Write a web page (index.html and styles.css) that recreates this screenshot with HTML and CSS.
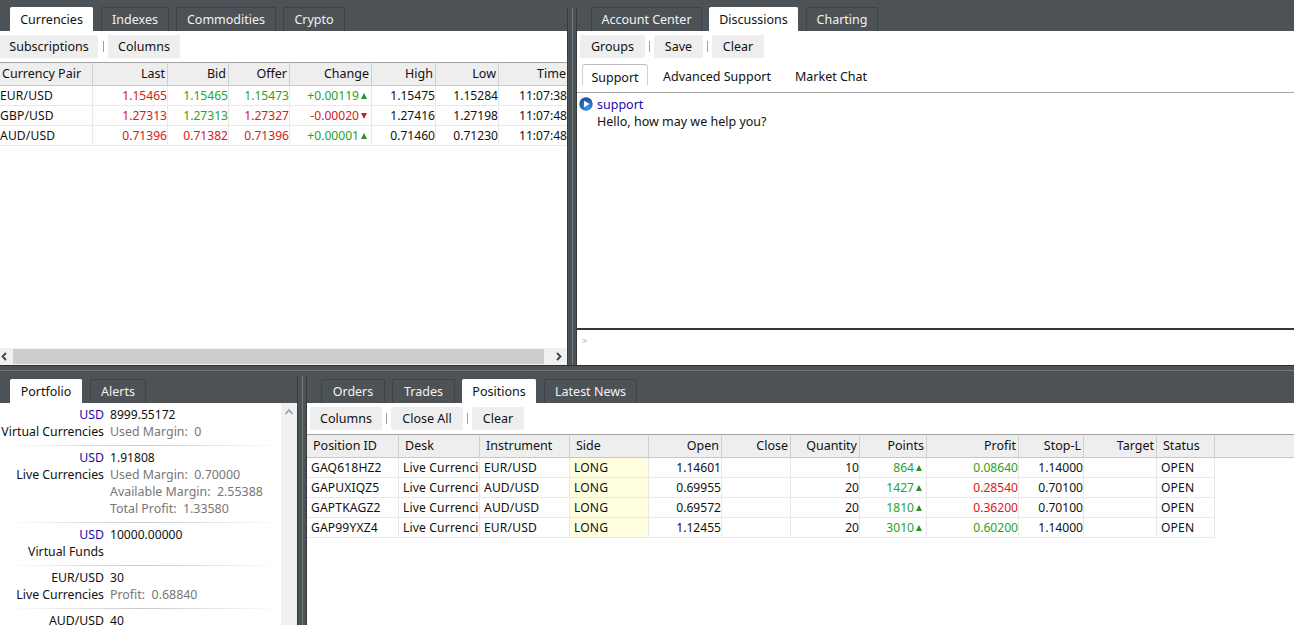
FILE: index.html
```
<!DOCTYPE html>
<html lang="en">
<head>
    <meta charset="UTF-8">
    <meta name="viewport" content="width=device-width, initial-scale=1.0">
    <title>Trading Desk</title>
    <link rel="stylesheet" href="styles.css">
</head>
<body>
    <div class="row row-top">
        <!-- Quotes -->
        <section class="pane">
            <nav class="tabs">
                <a class="tab active w83">Currencies</a>
                <a class="tab w68">Indexes</a>
                <a class="tab w100">Commodities</a>
                <a class="tab w62">Crypto</a>
            </nav>
            <div class="content">
                <div class="toolbar toolbar-flush">
                    <button class="w98">Subscriptions</button>
                    <i></i>
                    <button class="w72">Columns</button>
                </div>
                <table class="grid quotes">
                    <colgroup>
                        <col class="q-pair"><col class="q-last"><col class="q-bid"><col class="q-offer">
                        <col class="q-change"><col class="q-high"><col class="q-low"><col class="q-time">
                    </colgroup>
                    <thead>
                        <tr><th class="left">Currency Pair</th><th>Last</th><th>Bid</th><th>Offer</th><th>Change</th><th>High</th><th>Low</th><th>Time</th></tr>
                    </thead>
                    <tbody>
                        <tr><td class="left">EUR/USD</td><td class="down">1.15465</td><td class="up">1.15465</td><td class="up">1.15473</td><td class="up arrow-up">+0.00119</td><td>1.15475</td><td>1.15284</td><td>11:07:38</td></tr>
                        <tr><td class="left">GBP/USD</td><td class="down">1.27313</td><td class="up">1.27313</td><td class="down">1.27327</td><td class="down arrow-down">-0.00020</td><td>1.27416</td><td>1.27198</td><td>11:07:48</td></tr>
                        <tr><td class="left">AUD/USD</td><td class="down">0.71396</td><td class="down">0.71382</td><td class="down">0.71396</td><td class="up arrow-up">+0.00001</td><td>0.71460</td><td>0.71230</td><td>11:07:48</td></tr>
                    </tbody>
                </table>
                <div class="hscroll">
                    <svg width="13" height="17" viewBox="0 0 13 17"><path d="M6 5 2.500 8.500l3.500 3.500" /></svg>
                    <div class="thumb"></div>
                    <svg width="23" height="17" viewBox="0 0 23 17"><path d="M13 5l3.500 3.500L13 12" /></svg>
                </div>
            </div>
        </section>

        <div class="splitter"></div>

        <!-- Chat -->
        <section class="pane">
            <nav class="tabs tabs-inset">
                <a class="tab w111">Account Center</a>
                <a class="tab active w89">Discussions</a>
                <a class="tab w72 after-active">Charting</a>
            </nav>
            <div class="content">
                <div class="toolbar">
                    <button class="w65">Groups</button>
                    <i></i>
                    <button class="w49">Save</button>
                    <i></i>
                    <button class="w52">Clear</button>
                </div>
                <div class="rooms">
                    <a class="room current">Support</a>
                    <a class="room room-advanced">Advanced Support</a>
                    <a class="room">Market Chat</a>
                </div>
                <div class="messages">
                    <svg width="14" height="14" viewBox="0 0 14 14">
                        <defs>
                            <radialGradient id="ball" cx="0.6" cy="0.75" r="0.7">
                                <stop offset="0" stop-color="#3a9be8" />
                                <stop offset="1" stop-color="#1a4f9e" />
                            </radialGradient>
                        </defs>
                        <circle cx="7" cy="7" r="6.700" fill="url(#ball)" />
                        <path d="M5 3.800 10.500 7 5 10.200z" fill="#fff" />
                    </svg>
                    <div>
                        <div class="author">support</div>
                        <div class="message">Hello, how may we help you?</div>
                    </div>
                </div>
                <div class="prompt">&gt;</div>
            </div>
        </section>
    </div>

    <div class="hsplitter"></div>

    <div class="row row-bottom">
        <!-- Portfolio -->
        <section class="pane">
            <nav class="tabs">
                <a class="tab active w72">Portfolio</a>
                <a class="tab w56 after-active">Alerts</a>
            </nav>
            <div class="content portfolio">
                <div class="accounts">
                    <dl>
                        <dt class="usd">USD</dt><dd class="total">8999.55172</dd>
                        <dt>Virtual Currencies</dt><dd>Used Margin:&nbsp; 0</dd>
                    </dl>
                    <dl>
                        <dt class="usd">USD</dt><dd class="total">1.91808</dd>
                        <dt>Live Currencies</dt><dd>Used Margin:&nbsp; 0.70000</dd>
                        <dd class="more">Available Margin:&nbsp; 2.55388</dd>
                        <dd class="more">Total Profit:&nbsp; 1.33580</dd>
                    </dl>
                    <dl>
                        <dt class="usd">USD</dt><dd class="total">10000.00000</dd>
                        <dt>Virtual Funds</dt><dd></dd>
                    </dl>
                    <dl>
                        <dt>EUR/USD</dt><dd class="total">30</dd>
                        <dt>Live Currencies</dt><dd>Profit:&nbsp; 0.68840</dd>
                    </dl>
                    <dl>
                        <dt>AUD/USD</dt><dd class="total">40</dd>
                    </dl>
                </div>
                <div class="vscroll">
                    <svg width="16" height="18" viewBox="0 0 16 18"><path d="M4.500 11 8 7l3.500 4" /></svg>
                </div>
            </div>
        </section>

        <div class="splitter"></div>

        <!-- Positions -->
        <section class="pane">
            <nav class="tabs tabs-inset">
                <a class="tab w64">Orders</a>
                <a class="tab w63">Trades</a>
                <a class="tab active w74">Positions</a>
                <a class="tab w93 after-active">Latest News</a>
            </nav>
            <div class="content">
                <div class="toolbar">
                    <button class="w72">Columns</button>
                    <i></i>
                    <button class="w72">Close All</button>
                    <i></i>
                    <button class="w52">Clear</button>
                </div>
                <div class="grid-fill">
                    <table class="grid positions">
                        <colgroup>
                            <col class="p-id"><col class="p-desk"><col class="p-inst"><col class="p-side">
                            <col class="p-open"><col class="p-close"><col class="p-qty"><col class="p-points">
                            <col class="p-profit"><col class="p-stop"><col class="p-target"><col class="p-status">
                        </colgroup>
                        <thead>
                            <tr><th class="left">Position ID</th><th class="left">Desk</th><th class="left">Instrument</th><th class="left">Side</th><th>Open</th><th>Close</th><th>Quantity</th><th>Points</th><th>Profit</th><th>Stop-L</th><th>Target</th><th class="left">Status</th></tr>
                        </thead>
                        <tbody>
                            <tr><td class="left">GAQ618HZ2</td><td class="left">Live Currencies</td><td class="left">EUR/USD</td><td class="left side">LONG</td><td>1.14601</td><td></td><td>10</td><td class="up arrow-up">864</td><td class="up">0.08640</td><td>1.14000</td><td></td><td class="left">OPEN</td></tr>
                            <tr><td class="left">GAPUXIQZ5</td><td class="left">Live Currencies</td><td class="left">AUD/USD</td><td class="left side">LONG</td><td>0.69955</td><td></td><td>20</td><td class="up arrow-up">1427</td><td class="down">0.28540</td><td>0.70100</td><td></td><td class="left">OPEN</td></tr>
                            <tr><td class="left">GAPTKAGZ2</td><td class="left">Live Currencies</td><td class="left">AUD/USD</td><td class="left side">LONG</td><td>0.69572</td><td></td><td>20</td><td class="up arrow-up">1810</td><td class="down">0.36200</td><td>0.70100</td><td></td><td class="left">OPEN</td></tr>
                            <tr><td class="left">GAP99YXZ4</td><td class="left">Live Currencies</td><td class="left">EUR/USD</td><td class="left side">LONG</td><td>1.12455</td><td></td><td>20</td><td class="up arrow-up">3010</td><td class="up">0.60200</td><td>1.14000</td><td></td><td class="left">OPEN</td></tr>
                        </tbody>
                    </table>
                </div>
            </div>
        </section>
    </div>
</body>
</html>
```
FILE: styles.css
```
* {
    box-sizing: border-box;
}

body {
    margin: 0;
    width: 1294px;
    height: 625px;
    overflow: hidden;
    background: #4d5256;
    color: #111;
    font-family: "Noto Sans", "Open Sans", sans-serif;
    font-size: 12.5px;
    line-height: 17px;
}

.row {
    display: grid;
}

.row-top {
    grid-template-columns: 567px 10px 1fr;
    height: 365px;
}

.row-bottom {
    grid-template-columns: 297px 10px 1fr;
    height: 254px;
}

.pane {
    display: flex;
    flex-direction: column;
    min-width: 0;
    min-height: 0;
}

.content {
    flex: 1;
    display: flex;
    flex-direction: column;
    min-height: 0;
    overflow: hidden;
    background: #fff;
}

/* Splitters */
.splitter {
    margin-top: 8px;
    background: linear-gradient(90deg, #373b3e 0 1px, #4d5256 1px 5px, #74797c 5px 6px, #4d5256 6px 9px, #373b3e 9px);
}

.row-bottom .splitter {
    margin-top: 5px;
}

.hsplitter {
    height: 6px;
    background: linear-gradient(#2c2f32 0 1px, #4d5256 1px 5px, #70787b 5px);
}

/* Tabs */
.tabs {
    display: flex;
    gap: 7px;
    height: 31px;
    padding: 7px 0 0 10px;
}

.row-bottom .tabs {
    height: 32px;
    padding-top: 8px;
}

.tabs-inset,
.row-bottom .tabs-inset {
    padding-left: 14px;
}

.tab {
    display: flex;
    align-items: center;
    justify-content: center;
    height: 24px;
    border: 1px solid #3e4347;
    border-bottom: 0;
    border-radius: 2px 2px 0 0;
    color: #f2f2f2;
    white-space: nowrap;
}

.tab.active {
    border-color: #fff;
    background: #fff;
    color: #111;
}

.after-active,
.w68 {
    margin-left: 1px;
}

/* Toolbars */
.toolbar {
    display: flex;
    align-items: center;
    flex: none;
    height: 31px;
    padding-left: 3px;
}

.toolbar-flush {
    padding-left: 0;
}

.toolbar button {
    height: 23px;
    padding: 0;
    border: 0;
    border-radius: 2px;
    background: #eee;
    color: #111;
    font: inherit;
}

.toolbar i {
    width: 1px;
    height: 11px;
    margin: 0 4px;
    background: #a0a0a0;
}

.toolbar-flush i {
    margin-left: 5px;
}

.w49 { width: 49px; }
.w52 { width: 52px; }
.w56 { width: 56px; }
.w62 { width: 62px; }
.w63 { width: 63px; }
.w64 { width: 64px; }
.w65 { width: 65px; }
.w68 { width: 68px; }
.w72 { width: 72px; }
.w74 { width: 74px; }
.w83 { width: 83px; }
.w89 { width: 89px; }
.w93 { width: 93px; }
.w98 { width: 98px; }
.w100 { width: 100px; }
.w111 { width: 111px; }

/* Data grids */
.grid {
    table-layout: fixed;
    flex: none;
    border-collapse: separate;
    border-spacing: 0;
}

.grid th,
.grid td {
    overflow: hidden;
    padding: 0;
    border-right: 1px solid #e9e9e9;
    border-bottom: 1px solid #e9e9e9;
    text-align: right;
    white-space: nowrap;
}

.grid th {
    height: 24px;
    padding: 0 2px 2px;
    border-top: 1px solid #a3a3a3;
    border-right-color: #cfcfcf;
    border-bottom-color: #c8c8c8;
    background: #eee;
    font-weight: normal;
}

.grid td {
    height: 20px;
    font-size: 12.1px;
}

.grid .left {
    text-align: left;
}

.grid td.left {
    letter-spacing: 0.15px;
}

.quotes {
    width: 567px;
}

.quotes th:last-child,
.quotes td:last-child {
    border-right: 0;
}

.quotes th:last-child {
    padding-right: 1px;
}

.q-pair { width: 93px; }
.q-last { width: 75px; }
.q-bid { width: 61px; }
.q-offer { width: 61px; }
.q-change { width: 82px; }
.q-high { width: 64px; }
.q-low { width: 63px; }
.q-time { width: 68px; }

.positions {
    width: 908px;
}

.positions th.left {
    padding-left: 6px;
}

.positions td.left {
    padding-left: 4px;
}

.p-id { width: 92px; }
.p-desk { width: 81px; }
.p-inst { width: 90px; }
.p-side { width: 79px; }
.p-open { width: 73px; }
.p-close { width: 69px; }
.p-qty { width: 69px; }
.p-points { width: 67px; }
.p-profit { width: 92px; }
.p-stop { width: 65px; }
.p-target { width: 73px; }
.p-status { width: 58px; }

.grid-fill {
    background: linear-gradient(#a3a3a3 0 1px, #eee 1px 23px, #c8c8c8 23px 24px, #fff 24px);
}

.side {
    background: #ffffdf;
}

.up {
    color: #28a428;
}

.down {
    color: #d42020;
}

.arrow-up::after,
.arrow-down::after {
    content: "";
    display: inline-block;
    margin: 0 4px 1px 2px;
    border: 3px solid transparent;
}

.arrow-up::after {
    border-top: 0;
    border-bottom: 6px solid #2c8f2c;
}

.arrow-down::after {
    border-bottom: 0;
    border-top: 6px solid #b82828;
}

/* Scrollbars */
.hscroll {
    display: flex;
    height: 17px;
    margin-top: auto;
    background: #f0f0f0;
}

.hscroll .thumb {
    flex: 1;
    height: 15px;
    margin-top: 1px;
    background: #cdcdcd;
}

.hscroll path,
.vscroll path {
    fill: none;
    stroke: #404040;
    stroke-width: 1.8;
}

.vscroll {
    width: 16px;
    background: #f0f0f0;
}

.vscroll path {
    stroke: #a0a0a0;
}

/* Discussions */
.rooms {
    display: flex;
    align-items: flex-end;
    flex: none;
    height: 31px;
    padding: 0 0 7px 5px;
    border-bottom: 1px solid #a8a8a8;
}

.room {
    white-space: nowrap;
}

.room.current {
    width: 66px;
    height: 21px;
    padding-top: 4px;
    border: 1px solid;
    border-color: #bbb #d0d0d0;
    border-bottom: 0;
    border-radius: 3px 3px 0 0;
    text-align: center;
}

.room-advanced {
    margin: 0 24px 0 15px;
}

.messages {
    display: flex;
    flex: 1;
    gap: 4px;
    padding: 3px 0 0 2px;
}

.messages svg {
    margin-top: 1px;
}

.author,
.usd {
    color: #1a0dab;
}

.prompt {
    height: 37px;
    padding: 2px 5px;
    border-top: 2px solid #34383b;
    color: #aaa;
    font-size: 9px;
}

/* Portfolio */
.portfolio {
    flex-direction: row;
}

.accounts {
    flex: 1;
}

.accounts dl {
    display: grid;
    grid-template-columns: 104px 1fr;
    column-gap: 6px;
    margin: 0;
    padding: 3px 0 5px;
    border-bottom: 1px solid;
    border-image: linear-gradient(90deg, #fff 2%, #c9c9c9 50%, #fff) 1;
}

.accounts dt {
    font-size: 12.3px;
    text-align: right;
    white-space: nowrap;
}

.accounts dd {
    margin: 0;
    color: #777;
    font-size: 12.4px;
    white-space: nowrap;
}

.accounts .total {
    color: #111;
    font-size: 12.1px;
}

.accounts .more {
    grid-column: 2;
}
```
